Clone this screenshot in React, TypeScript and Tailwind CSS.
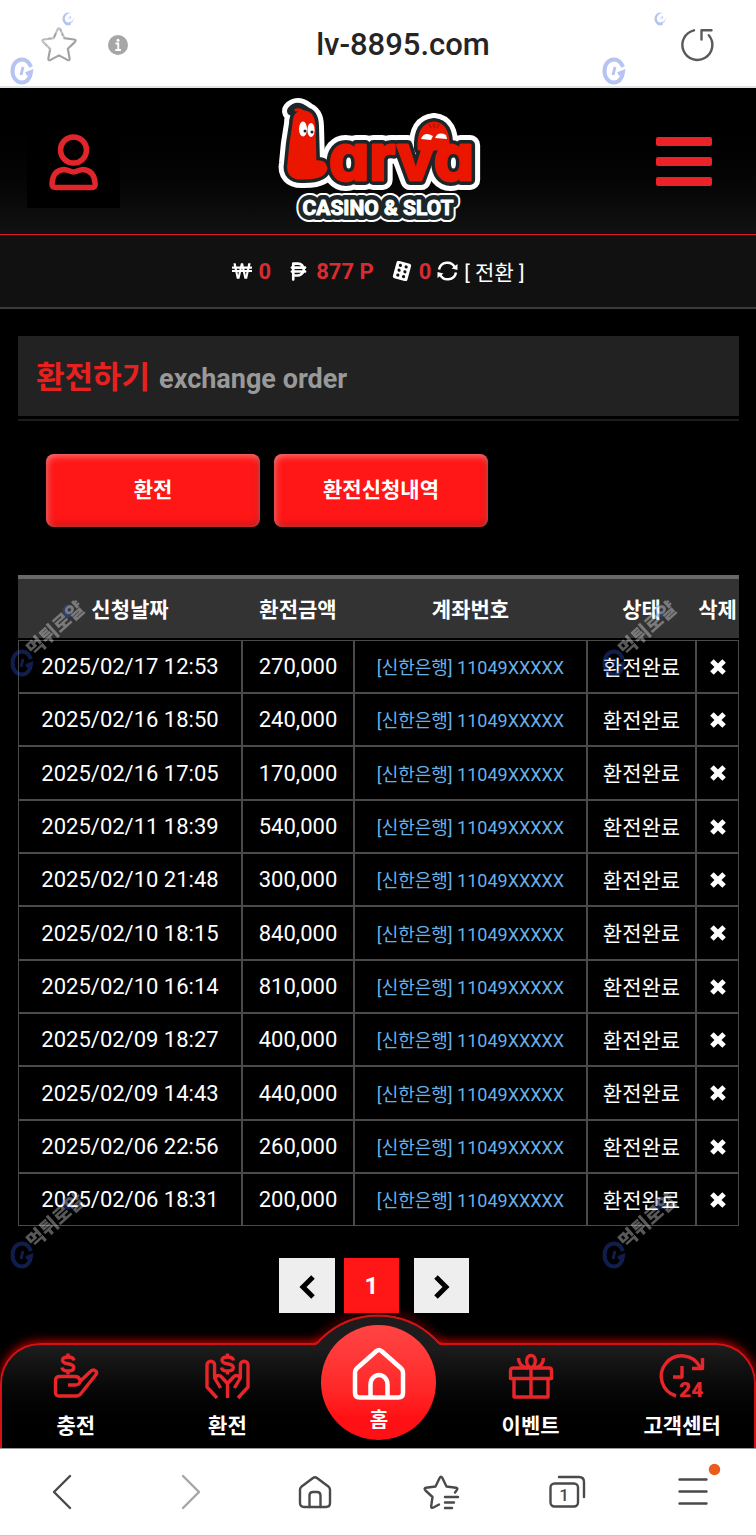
import type { ReactNode } from 'react';
import { FaWonSign } from 'react-icons/fa';
import { FaPesoSign } from 'react-icons/fa6';

const rows: [string, string][] = [
  ['2025/02/17 12:53', '270,000'],
  ['2025/02/16 18:50', '240,000'],
  ['2025/02/16 17:05', '170,000'],
  ['2025/02/11 18:39', '540,000'],
  ['2025/02/10 21:48', '300,000'],
  ['2025/02/10 18:15', '840,000'],
  ['2025/02/10 16:14', '810,000'],
  ['2025/02/09 18:27', '400,000'],
  ['2025/02/09 14:43', '440,000'],
  ['2025/02/06 22:56', '260,000'],
  ['2025/02/06 18:31', '200,000'],
];

function BrowserTop() {
  return (
    <div className="flex h-[88px] items-center border-b-2 border-[#e2e2e2] bg-white px-10 pt-1">
      <button aria-label="즐겨찾기">
        <svg width="38" height="38" viewBox="0 0 38 38" fill="none" stroke="#a3a3a3" strokeWidth="2.2" strokeLinejoin="round">
          <path d="M17.6 3.6q1.4-2.6 2.8 0l4 8.600 9.600 1.300q2.800.500.800 2.600l-7 6.700 1.800 9.600q.300 2.700-2.200 1.500L19 29.400l-8.400 4.500q-2.500 1.200-2.200-1.500l1.800-9.600-7-6.700q-2-2.100.800-2.600l9.600-1.300z" />
        </svg>
      </button>
      <button aria-label="사이트 정보" className="ml-[30px]">
        <svg width="20" height="20" viewBox="0 0 20 20">
          <circle cx="10" cy="10" r="10" fill="#a6a6a6" />
          <circle cx="10" cy="5.200" r="1.500" fill="#fff" />
          <path d="M7.500 8.500H10.300V15M7.300 15h5.600" stroke="#fff" strokeWidth="1.800" fill="none" />
        </svg>
      </button>
      <p className="flex-1 text-center text-[31px] font-medium text-[#252525]">lv-8895.com</p>
      <button aria-label="새로고침">
        <svg width="38" height="38" viewBox="0 0 38 38" fill="none" stroke="#5a5a5a" strokeWidth="2.400" strokeLinecap="round" strokeLinejoin="round">
          <path d="M16 4.300A15 15 0 1 0 30.800 9.200" />
          <path d="M23.500 13.500V4.300H33.500" />
        </svg>
      </button>
    </div>
  );
}

function LogoWord({ className, width }: { className: string; width: number }) {
  return (
    <g className={className} strokeWidth={width} strokeLinejoin="round">
      <path d="M17 27C17 17 22 14 28 15C34 16 37 21 37 30L38 65C44 64 48 66 49 71C48 78 40 81 27 81C15 82 10 76 12 66C13 52 15 38 17 27Z" />
      <path d="M142 52C141 34 147 27 157 26C167 27 172 35 171 52Z" />
      <text x="52" y="83" fontSize="64" fontWeight="700" className="font-[Inter,sans-serif]" style={{ fontFeatureSettings: '"cv11"' }}>
        arva
      </text>
    </g>
  );
}

function LogoTag({ className, width }: { className: string; width: number }) {
  return (
    <text
      x="101"
      y="118"
      textAnchor="middle"
      fontSize="21"
      fontWeight="700"
      strokeWidth={width}
      strokeLinejoin="round"
      className={className}
    >
      CASINO &amp; SLOT
    </text>
  );
}

function Logo() {
  return (
    <svg width="202" height="128" viewBox="0 0 202 128" className="overflow-visible" role="img" aria-label="Larva Casino & Slot">
      <path d="M15 14Q20 8 28 14" className="fill-none stroke-white" strokeLinecap="round" strokeWidth="20" />
      <LogoWord className="fill-white stroke-white" width={20} />
      <LogoTag className="fill-white stroke-white" width={14} />
      <LogoTag className="fill-[#1c2628] stroke-[#1c2628]" width={10} />
      <LogoTag className="fill-white stroke-white" width={1} />
      <path d="M15 14Q20 8 28 14" className="fill-none stroke-[#1c2628]" strokeWidth="10" strokeLinecap="round" />
      <LogoWord className="fill-[#1c2628] stroke-[#1c2628]" width={10} />
      <LogoWord className="fill-[#ea1600] stroke-[#ea1600]" width={3} />
      <path d="M19 13q5-1 9 4" className="fill-none stroke-[#ea1600]" strokeWidth="3" strokeLinecap="round" />
      <g fill="#fff">
        <ellipse cx="26" cy="32" rx="4" ry="7.500" />
        <ellipse cx="34" cy="33" rx="3.600" ry="7" />
        <path d="M144 42q3-8 12-3l-2 4zM158 41q3-7 11-3l1 4z" />
      </g>
      <circle cx="28" cy="34" r="1.500" fill="#1c2628" />
      <circle cx="35" cy="35" r="1.500" fill="#1c2628" />
      <path d="M154 31l-2-4M157 31v-5M160 31l2-4" stroke="#8c1206" strokeWidth="1" />
    </svg>
  );
}

function Header() {
  return (
    <header className="flex h-[147px] items-center justify-between border-b border-[#e01b22] bg-linear-to-b from-black to-[#121212] pr-11 pl-[27px]">
      <button aria-label="내 정보" className="grid size-[93px] place-items-center bg-black">
        <svg width="50" height="62" viewBox="0 -4 50 62" fill="none" stroke="#e0252b" strokeWidth="5.500" strokeLinejoin="round">
          <circle cx="24.500" cy="16" r="13" />
          <path d="M7 53.500H43Q46.500 53.500 46.200 50C45.500 40 41 36 34 35.500C30 35.500 28 38 24.500 38C21 38 19 35.500 15 35.500C8 36 3.500 40 3 50Q3 53.500 7 53.500Z" />
        </svg>
      </button>
      <a href="#home">
        <Logo />
      </a>
      <button aria-label="메뉴" className="ml-5 flex w-14 flex-col gap-[11px]">
        <span className="h-[9px] rounded-[2px] bg-[#eb2227]" />
        <span className="h-[9px] rounded-[2px] bg-[#eb2227]" />
        <span className="h-[9px] rounded-[2px] bg-[#eb2227]" />
      </button>
    </header>
  );
}

function Balance() {
  return (
    <div className="flex h-[74px] items-center justify-center border-b-2 border-[#3a3a3a] bg-[#111] text-[22px] font-bold text-[#d82c32]">
      <FaWonSign className="size-5 text-white" />
      <span className="ml-[7px]">0</span>
      <FaPesoSign className="ml-[17px] size-[21px] text-white" />
      <span className="ml-[7px]">877 P</span>
      <svg width="20" height="20" viewBox="0 0 20 20" className="ml-[18px]">
        <g transform="rotate(15 10 10)">
          <rect x="2.500" y="1" width="15" height="18" rx="2" fill="#fff" />
          <g fill="#111">
            <circle cx="7" cy="5" r="1.600" />
            <circle cx="13" cy="5" r="1.600" />
            <circle cx="7" cy="10" r="1.600" />
            <circle cx="13" cy="10" r="1.600" />
            <circle cx="7" cy="15" r="1.600" />
            <circle cx="13" cy="15" r="1.600" />
          </g>
        </g>
      </svg>
      <span className="ml-[7px]">0</span>
      <button className="ml-[6px] flex items-center gap-[6px] text-[21px] font-normal text-white">
        <svg width="21" height="22" viewBox="0 0 21 22" fill="none" stroke="#fff" strokeWidth="2.500">
          <path d="M2 9.500A8.500 8.500 0 0 1 18 7.500M19 12.500A8.500 8.500 0 0 1 3 14.500" />
          <path d="M20.500 4v6l-6-1.500zM.5 18v-6l6 1.500z" fill="#fff" stroke="none" />
        </svg>
        <span className="pt-[6px]">[ 전환 ]</span>
      </button>
    </div>
  );
}

const redButton =
  'h-[73px] w-[214px] rounded-[8px] bg-[#ff1717] text-[21px] font-bold text-white shadow-[inset_1px_2px_7px_rgba(255,255,255,0.45),inset_-1px_-2px_6px_rgba(110,0,0,0.6)]';

const cell = 'border border-[#4a4a4a] p-0 text-center';

function OrderTable() {
  return (
    <table className="mt-12 w-full table-fixed border-separate border-spacing-0">
      <colgroup>
        <col className="w-[224px]" />
        <col className="w-[112px]" />
        <col className="w-[233px]" />
        <col className="w-[109px]" />
        <col className="w-[43px]" />
      </colgroup>
      <thead>
        <tr className="h-[65px] bg-[#333] text-[21px] text-white">
          {['신청날짜', '환전금액', '계좌번호', '상태', '삭제'].map((h) => (
            <th key={h} className="border-t-4 border-b-2 border-t-[#686868] border-b-black p-0 pt-1 font-bold whitespace-nowrap">
              {h}
            </th>
          ))}
        </tr>
      </thead>
      <tbody>
        {rows.map(([date, amount]) => (
          <tr key={date} className="h-[53px] nth-[3n]:h-[54px]">
            <td className={`${cell} text-[22px]`}>{date}</td>
            <td className={`${cell} text-[22px]`}>{amount}</td>
            <td className={`${cell} pt-[2px] text-[18px] text-[#67b0ea]`}>[신한은행] 11049XXXXX</td>
            <td className={`${cell} pt-1 text-[21px]`}>환전완료</td>
            <td className={cell}>
              <button aria-label="삭제" className="block w-full">
                <svg width="16" height="16" viewBox="0 0 16 16" className="mx-auto" stroke="#fff" strokeWidth="5" strokeLinecap="square">
                  <path d="M3.700 3.700l8.600 8.600M12.300 3.700l-8.600 8.600" />
                </svg>
              </button>
            </td>
          </tr>
        ))}
      </tbody>
    </table>
  );
}

function Pagination() {
  return (
    <nav aria-label="페이지" className="mt-8 flex justify-center gap-[9px] pr-[9px]">
      <button aria-label="이전" className="grid h-[55px] w-14 place-items-center bg-[#eee]">
        <svg width="16" height="26" viewBox="0 -2 16 26" fill="none" stroke="#000" strokeWidth="5">
          <path d="M14 2 4 12l10 10" />
        </svg>
      </button>
      <button aria-current="page" className="size-[55px] bg-[#ff1717] text-[24px] font-bold text-white">
        1
      </button>
      <button aria-label="다음" className="ml-[6px] grid size-[55px] place-items-center bg-[#eee]">
        <svg width="16" height="26" viewBox="0 -2 16 26" fill="none" stroke="#000" strokeWidth="5">
          <path d="m2 2 10 10L2 22" />
        </svg>
      </button>
    </nav>
  );
}

function MenuItem({ label, children }: { label: string; children: ReactNode }) {
  return (
    <a href="#menu" className="flex flex-col items-center pt-2 text-[21px] leading-[30px] font-bold text-white">
      <svg width="46" height="46" viewBox="-1 -1 46 46" className="overflow-visible" fill="none" stroke="#e8262a" strokeWidth="3.400" strokeLinejoin="round">
        {children}
      </svg>
      <span className="mt-3">{label}</span>
    </a>
  );
}

function Dollar({ x }: { x: number }) {
  return (
    <path
      transform={`translate(${x} 0)`}
      d="M6 6.500C5.600 4 3.600 3 0 3C-3.500 3-5.500 4-5.500 6.300C-5.500 9-3 9.300 0 9.800C3.200 10.400 5.800 11 5.800 13.500C5.800 16 3.500 17 0 17C-3.600 17-5.600 16-6 13.500M0-.5V3M0 17V20.500"
    />
  );
}

function BottomMenu() {
  return (
    <nav
      aria-label="주 메뉴"
      className="relative mt-[30px] h-[105px] rounded-t-[40px] border-x-2 border-t-2 border-[#d41216] bg-linear-to-b from-[#1d1d1d] to-black shadow-[0_-2px_10px_rgba(255,0,0,0.75)]"
    >
      <svg width="130" height="38" viewBox="0 0 130 38" className="absolute -top-[32px] left-1/2 -translate-x-1/2 overflow-visible">
        <path
          d="M0 31C5 31 5 29 8 26C40-5 90-5 122 26C125 29 125 31 130 31"
          fill="none"
          stroke="#e01216"
          strokeWidth="2"
          className="drop-shadow-[0_-2px_4px_rgba(255,0,0,0.9)]"
        />
        <path d="M3 32C5 31 5 29 8 26C40-5 90-5 122 26C125 29 125 31 127 32V38H3Z" fill="#1d1b1c" />
        <path d="M0 31C5 31 5 29 8 26C40-5 90-5 122 26C125 29 125 31 130 31" fill="none" stroke="#c91418" strokeWidth="2" />
      </svg>
      <div className="-mr-1 -ml-[2px] grid grid-cols-5">
        <MenuItem label="충전">
          <Dollar x={14} />
          <path d="M14 31h7c3.500 0 5.500-2 5-4.500-.500-2.500-2-4-5-4H6c-3 0-4.500 1.500-4.500 4V38c0 3 1 4 3.500 4h17c2.500 0 3.500-.600 5-2.500L42 20.500c2-3-2.500-6-5-3.500L26 27.500" />
        </MenuItem>
        <MenuItem label="환전">
          <Dollar x={22.5} />
          <path d="M12 44 2 33V11a3.800 3.800 0 0 1 7.600 0V24l6 10M33 44 43 33V11a3.800 3.800 0 0 0-7.600 0V24l-6 10M9.600 25c1.500-4 4.500-4.500 7-2l5.900 6.500L28.400 23c2.500-2.500 5.500-2 7 2M22.500 29V44" />
        </MenuItem>
        <a
          href="#home"
          className="relative -mt-5 flex size-[115px] flex-col items-center justify-self-center rounded-full bg-linear-to-b from-[#ff4444] to-[#ff1015] to-80% pt-[22px] text-[20px] leading-[30px] font-bold text-white"
        >
          <svg width="54" height="54" viewBox="0 -2 54 54" fill="none" stroke="#fff" strokeWidth="4.500" strokeLinejoin="round">
            <path d="M3 23.500Q3 21 5 19.300L24.500 2Q27 0 29.500 2L49 19.300Q51 21 51 23.500V44Q51 48.500 46.500 48.500H7.500Q3 48.500 3 44Z" />
            <path d="M18.500 48.500V35.500a8.500 9.500 0 0 1 17 0V48.500" />
          </svg>
          <span className="mt-1">홈</span>
        </a>
        <MenuItem label="이벤트">
          <path d="M4 14H40Q42.500 14 42.500 16.500V24.500H1.500V16.500Q1.500 14 4 14ZM5 24.500V43H39V24.500M22 14V43" />
          <path d="M22 14C16 11 16.500 1.500 22 1.500S28 11 22 14ZM19 14C13 13 9.500 10 9.500 4M25 14C31 13 34.500 10 34.500 4" />
        </MenuItem>
        <MenuItem label="고객센터">
          <path d="M16 42A20.500 20.500 0 1 1 40 13M42.500 4V14.500H32M22 12V23H13" />
          <text x="19" y="43" fontSize="21" fontWeight="900" fill="#e8262a" stroke="none">
            24
          </text>
        </MenuItem>
      </div>
    </nav>
  );
}

function BarButton({ label, tone = '#4a4a4a', children }: { label: string; tone?: string; children: ReactNode }) {
  return (
    <button aria-label={label} className="grid place-items-center">
      <svg width="36" height="36" viewBox="0 0 36 36" className="overflow-visible" fill="none" stroke={tone} strokeWidth="2.400" strokeLinecap="round" strokeLinejoin="round">
        {children}
      </svg>
    </button>
  );
}

function BrowserBottom() {
  return (
    <div className="relative grid h-[88px] grid-cols-6 border-t border-b border-t-[#999] border-b-[#c8c8c8] bg-white">
      <BarButton label="뒤로">
        <path d="M25 2 9 18l16 16" />
      </BarButton>
      <BarButton label="앞으로" tone="#a5a5a5">
        <path d="m12 2 16 16-16 16" />
      </BarButton>
      <BarButton label="홈">
        <path d="M3 15.500Q3 14 4.300 12.800L16 4Q18 2.500 20 4L31.700 12.800Q33 14 33 15.500V29Q33 33 29 33H7Q3 33 3 29Z" />
        <path d="M12.500 33V21.500Q12.500 18 16 18H20Q23.500 18 23.500 21.500V33" />
      </BarButton>
      <BarButton label="북마크">
        <path d="M16 30.500 10.500 33.500Q8 34.500 8.200 32L9.500 23 2.500 16.500Q.5 14.500 3 13.700L12.500 12.500 16.600 4Q18 1.500 19.400 4L23.500 12.500 33 13.700Q35.500 14.500 33.500 16.500L32 18.500" />
        <path d="M22 23H35M22 28.500H31M22 34H29" />
      </BarButton>
      <BarButton label="탭">
        <rect x="1.500" y="9.500" width="27.500" height="23" rx="4" />
        <path d="M10 3H30Q35 3 35 8V23" />
        <text x="15" y="27" textAnchor="middle" fontSize="17" fill="#4a4a4a" stroke="none" fontWeight="500">
          1
        </text>
      </BarButton>
      <BarButton label="더보기">
        <path d="M4.500 5.500H31.500M4.500 17.500H31.500M4.500 29.500H31.500" />
        <circle cx="39.500" cy="-4.500" r="5.700" fill="#ea5b1c" stroke="none" />
      </BarButton>
    </div>
  );
}

function Watermark({ place }: { place: string }) {
  return (
    <svg aria-hidden="true" width="90" height="90" viewBox="0 0 90 90" className={`pointer-events-none absolute opacity-35 ${place}`}>
      <g fill="none" stroke="#2d58dc">
        <path d="M26 62C24 57 21 54.500 17 54.500C11.500 54.500 7.500 59.500 7.500 66S11.500 77.500 17 77.500C22 77.500 25.500 73 26 67L21 69" strokeWidth="4" />
        <path d="M16 70l2-8" strokeWidth="3" />
        <ellipse cx="63" cy="14" rx="4" ry="5" strokeWidth="3" fill="#2d58dc" fillOpacity="0.3" />
      </g>
      <text x="29" y="60" transform="rotate(-42 29 60)" fontSize="19" fontWeight="900" fill="#fff">
        먹튀로얄
      </text>
    </svg>
  );
}

export default function App() {
  return (
    <div className="relative overflow-hidden bg-black font-[Roboto,'Noto_Sans_CJK_KR',sans-serif] text-white">
      <BrowserTop />
      <Header />
      <Balance />
      <main className="pt-[27px] pr-[17px] pl-[18px]">
        <div className="border-b-2 border-[#1c1c1c] pb-[3px]">
          <h1 className="flex h-20 items-center gap-[9px] bg-[#222] px-[18px] pt-1 text-[31px] font-bold text-[#e6211f]">
            환전하기
            <small className="pt-[2px] text-[27px] font-bold text-[#999]">exchange order</small>
          </h1>
        </div>
        <div className="mt-[33px] flex gap-[14px] pl-7">
          <button className={redButton}>환전</button>
          <button className={redButton}>환전신청내역</button>
        </div>
        <OrderTable />
        <Pagination />
      </main>
      <BottomMenu />
      <BrowserBottom />
      <Watermark place="left-[5px] top-[5px]" />
      <Watermark place="left-[597px] top-[5px]" />
      <Watermark place="left-[5px] top-[597px]" />
      <Watermark place="left-[597px] top-[597px]" />
      <Watermark place="left-[5px] top-[1189px]" />
      <Watermark place="left-[597px] top-[1189px]" />
    </div>
  );
}
